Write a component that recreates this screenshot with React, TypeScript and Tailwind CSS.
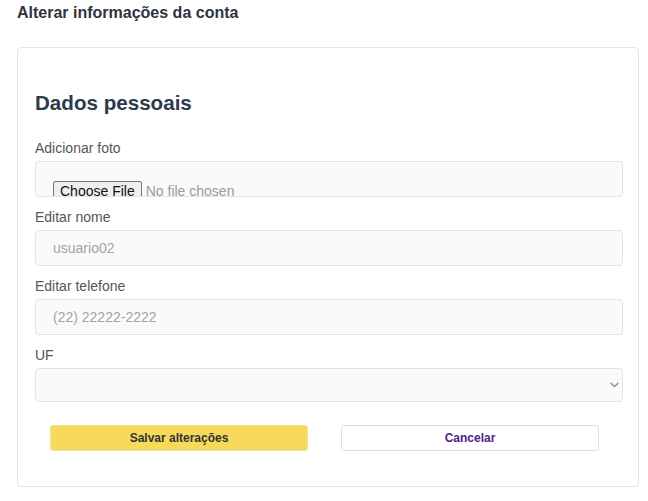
import { useState } from 'react';

const fieldBox =
  'h-9 w-full rounded-[4px] border border-[#e3e3e3] bg-[#fafafa] px-[17px] text-[14px] text-[#555] placeholder:text-[#a2a2a8] outline-none';

export default function App() {
  const [nome, setNome] = useState('');
  const [telefone, setTelefone] = useState('');

  return (
    <div className="min-h-[501px] bg-white px-[17px] pt-[3px] font-['Liberation_Sans',Arial,sans-serif]">
      <h1 className="text-[16px] font-bold leading-[19px] text-[#2f3440]">
        Alterar informações da conta
      </h1>

      <div className="mt-[25px] w-[622px] rounded-[4px] border border-[#e6e6e6] pb-[35px] pl-[17px] pr-[15px] pt-[41px]">
        <h2 className="text-[20.6px] font-bold leading-[28px] text-[#2e3a4a]">Dados pessoais</h2>

        <form className="mt-[21px] flex flex-col">
          <label className="mb-[3px] text-[14px] leading-[20px] text-[#555]">Adicionar foto</label>
          <div className="h-9 w-full overflow-hidden rounded-[4px] border border-[#e3e3e3] bg-[#fafafa] pl-[17px] pt-[17px]">
            <input
              type="file"
              className="text-[14px] leading-[19px] text-[#9a9a9a] file:mr-[4px] file:rounded-[2px] file:border file:border-solid file:border-[#767676] file:bg-[#efefef] file:px-[6px] file:py-[0px] file:text-[14px] file:text-[#111]"
            />
          </div>

          <label className="mb-[3px] mt-[10px] text-[14px] leading-[20px] text-[#555]">Editar nome</label>
          <input
            className={fieldBox}
            placeholder="usuario02"
            value={nome}
            onChange={(e) => setNome(e.target.value)}
          />

          <label className="mb-[3px] mt-[10px] text-[14px] leading-[20px] text-[#555]">Editar telefone</label>
          <input
            className={fieldBox}
            placeholder="(22) 22222-2222"
            value={telefone}
            onChange={(e) => setTelefone(e.target.value)}
          />

          <label className="mb-[3px] mt-[10px] text-[14px] leading-[20px] text-[#555]">UF</label>
          <div className="relative">
            <select className="h-[34px] w-full appearance-none rounded-[4px] border border-[#e3e3e3] bg-[#fafafa] px-[17px] text-[14px] text-[#555] outline-none">
              <option value=""></option>
            </select>
            <svg
              className="pointer-events-none absolute right-[4px] top-[14px]"
              width="9"
              height="6"
              viewBox="0 0 9 6"
              fill="none"
            >
              <path d="M1 1.2l3.5 3.3L8 1.2" stroke="#8b8fa3" strokeWidth="1.4" strokeLinecap="round" />
            </svg>
          </div>

          <div className="mt-[23px] flex gap-[33px] pl-[15px]">
            <button
              type="button"
              className="h-[26px] w-[258px] rounded-[3px] border border-[#eee1a8] bg-[#f8da5b] text-[12px] font-bold text-[#333]"
            >
              Salvar alterações
            </button>
            <button
              type="button"
              className="h-[26px] w-[258px] rounded-[3px] border border-[#dedede] bg-white text-[12px] font-bold text-[#4f2386]"
            >
              Cancelar
            </button>
          </div>
        </form>
      </div>
    </div>
  );
}
